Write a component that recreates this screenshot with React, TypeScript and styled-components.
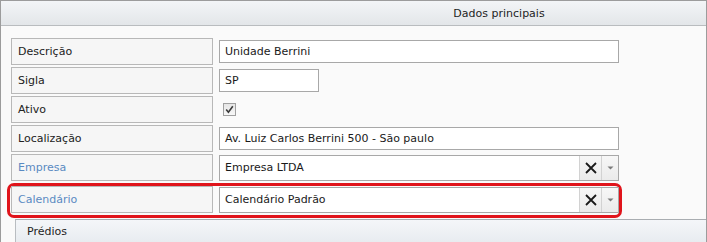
import React, { FC } from 'react';
import styled, { createGlobalStyle } from 'styled-components';

const GlobalStyle = createGlobalStyle`
  html, body {
    margin: 0;
    padding: 0;
    background: #ffffff;
  }
  body {
    font-family: 'DejaVu Sans', Verdana, sans-serif;
    font-size: 11px;
    color: #222;
  }
`;

const StyledFrame = styled.div`
  box-sizing: border-box;
  width: 707px;
  height: 242px;
  overflow: hidden;
  border: 1px solid #9c9c9c;
  border-bottom: 0;
  background: #fafafa;
  display: flex;
  flex-direction: column;
`;

const StyledHeader = styled.div`
  height: 24px;
  flex: none;
  display: flex;
  align-items: center;
  justify-content: center;
  padding-left: 291px;
  background: linear-gradient(#f3f5f7, #e3e6e9);
  border-bottom: 1px solid #b9bcbf;
  color: #1e1e1e;
`;

const StyledForm = styled.div`
  display: flex;
  flex-direction: column;
  align-items: flex-start;
  gap: 2px;
  padding: 12px 0 0 10px;
`;

const StyledRow = styled.div`
  display: grid;
  grid-template-columns: 202px 400px;
  column-gap: 6px;
  height: 27px;
  align-items: center;
`;

const StyledLabel = styled.div<{ linked?: boolean }>`
  box-sizing: border-box;
  height: 27px;
  display: flex;
  align-items: center;
  padding-left: 6px;
  background: #f6f6f6;
  border: 1px solid #b8b8b8;
  color: ${({ linked }) => (linked ? '#5a8ac2' : '#222')};
`;

const StyledInput = styled.div<{ width?: number }>`
  box-sizing: border-box;
  width: ${({ width }) => width ?? 400}px;
  height: 23px;
  display: flex;
  align-items: center;
  padding-left: 5px;
  background: #fff;
  border: 1px solid #a8a8a8;
  color: #1a1a1a;
`;

const StyledCheck = styled.span`
  box-sizing: border-box;
  width: 13px;
  height: 13px;
  margin-left: 4px;
  border: 1px solid #a0a0a0;
  background: linear-gradient(#e6e6e6, #f7f7f7);
  display: flex;
  align-items: center;
  justify-content: center;
`;

const StyledCombo = styled.div`
  box-sizing: border-box;
  width: 400px;
  height: 26px;
  display: flex;
  background: #fff;
  border: 1px solid #a8a8a8;
`;

const StyledComboText = styled.div`
  flex: 1;
  display: flex;
  align-items: center;
  padding-left: 5px;
  color: #1a1a1a;
`;

const StyledComboButton = styled.div<{ size: number }>`
  width: ${({ size }) => size}px;
  display: flex;
  align-items: center;
  justify-content: center;
  border-left: 1px solid #d2d2d2;
  background: linear-gradient(#f7f7f7, #ebebeb);
`;

const StyledHighlight = styled.div`
  margin-left: -4px;
  padding: 0 0 2px 1px;
  border: 3px solid #e0141b;
  border-radius: 7px;
`;

const StyledTabBar = styled.div`
  flex: 1;
  margin: 1px 0 0 14px;
  display: flex;
  align-items: flex-start;
  padding: 5px 0 0 11px;
  background: linear-gradient(#f4f6f9, #e8ecf0);
  border-top: 1px solid #a9adb1;
  border-left: 1px solid #b9bdc1;
  color: #1e1e1e;
`;

const CheckMark: FC = () => (
  <svg width="9" height="9" viewBox="0 0 9 9">
    <path d="M1.2 4.6 L3.4 7.2 L7.8 1.2" fill="none" stroke="#3a3a3a" strokeWidth="1.6" />
  </svg>
);

const ClearIcon: FC = () => (
  <svg width="12" height="12" viewBox="0 0 12 12">
    <path d="M1 1 L11 11 M11 1 L1 11" stroke="#1a1a1a" strokeWidth="1.8" />
  </svg>
);

const ArrowIcon: FC = () => (
  <svg width="7" height="4" viewBox="0 0 7 4">
    <path d="M0.5 0.5 L6.5 0.5 L3.5 3.5 Z" fill="#7a7a7a" />
  </svg>
);

const Combo: FC<{ value: string }> = ({ value }) => (
  <StyledCombo>
    <StyledComboText>{value}</StyledComboText>
    <StyledComboButton size={21}>
      <ClearIcon />
    </StyledComboButton>
    <StyledComboButton size={16}>
      <ArrowIcon />
    </StyledComboButton>
  </StyledCombo>
);

const App: FC = () => (
  <>
    <GlobalStyle />
    <StyledFrame>
      <StyledHeader>Dados principais</StyledHeader>
      <StyledForm>
        <StyledRow>
          <StyledLabel>Descrição</StyledLabel>
          <StyledInput>Unidade Berrini</StyledInput>
        </StyledRow>
        <StyledRow>
          <StyledLabel>Sigla</StyledLabel>
          <StyledInput width={100}>SP</StyledInput>
        </StyledRow>
        <StyledRow>
          <StyledLabel>Ativo</StyledLabel>
          <StyledCheck>
            <CheckMark />
          </StyledCheck>
        </StyledRow>
        <StyledRow>
          <StyledLabel>Localização</StyledLabel>
          <StyledInput>Av. Luiz Carlos Berrini 500 - São paulo</StyledInput>
        </StyledRow>
        <StyledRow>
          <StyledLabel linked>Empresa</StyledLabel>
          <Combo value="Empresa LTDA" />
        </StyledRow>
        <StyledHighlight>
          <StyledRow>
            <StyledLabel linked>Calendário</StyledLabel>
            <Combo value="Calendário Padrão" />
          </StyledRow>
        </StyledHighlight>
      </StyledForm>
      <StyledTabBar>Prédios</StyledTabBar>
    </StyledFrame>
  </>
);

export default App;
